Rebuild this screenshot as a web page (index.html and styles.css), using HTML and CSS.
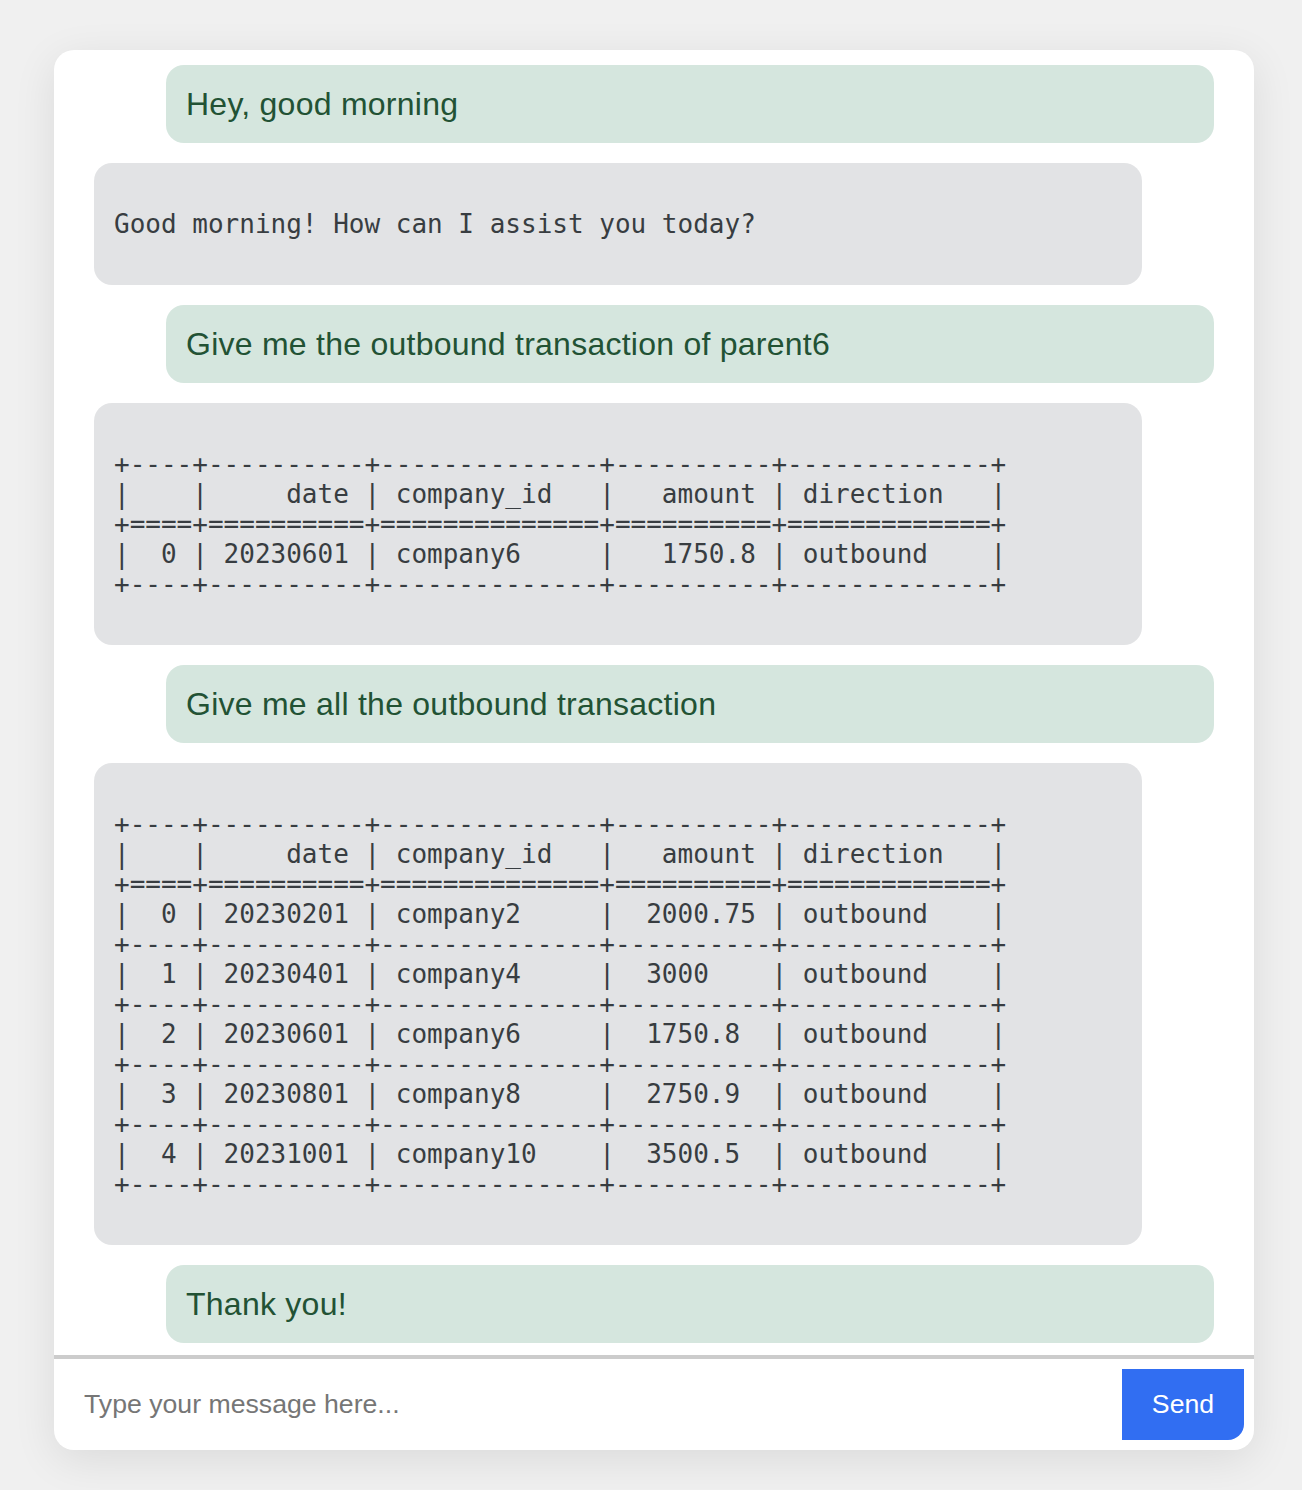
FILE: index.html
```html
<!DOCTYPE html>
<html lang="en">
<head>
<meta charset="utf-8">
<title>Chat</title>
<link rel="stylesheet" href="styles.css">
</head>
<body>
<div class="chat">
  <div class="messages">
    <div class="msg user">Hey, good morning</div>
    <div class="msg bot"><pre>Good morning! How can I assist you today?</pre></div>
    <div class="msg user">Give me the outbound transaction of parent6</div>
    <div class="msg bot"><pre>+----+----------+--------------+----------+-------------+
|    |     date | company_id   |   amount | direction   |
+====+==========+==============+==========+=============+
|  0 | 20230601 | company6     |   1750.8 | outbound    |
+----+----------+--------------+----------+-------------+</pre></div>
    <div class="msg user">Give me all the outbound transaction</div>
    <div class="msg bot"><pre>+----+----------+--------------+----------+-------------+
|    |     date | company_id   |   amount | direction   |
+====+==========+==============+==========+=============+
|  0 | 20230201 | company2     |  2000.75 | outbound    |
+----+----------+--------------+----------+-------------+
|  1 | 20230401 | company4     |  3000    | outbound    |
+----+----------+--------------+----------+-------------+
|  2 | 20230601 | company6     |  1750.8  | outbound    |
+----+----------+--------------+----------+-------------+
|  3 | 20230801 | company8     |  2750.9  | outbound    |
+----+----------+--------------+----------+-------------+
|  4 | 20231001 | company10    |  3500.5  | outbound    |
+----+----------+--------------+----------+-------------+</pre></div>
    <div class="msg user">Thank you!</div>
  </div>
  <div class="composer">
    <input class="input" type="text" placeholder="Type your message here...">
    <button class="send" type="button">Send</button>
  </div>
</div>
</body>
</html>
```

FILE: styles.css
```css
html, body {
  margin: 0;
  padding: 0;
}
body {
  background: #f0f0f0;
  height: 1490px;
  overflow: hidden;
  font-family: "Liberation Sans", Arial, Helvetica, sans-serif;
}
.chat {
  margin: 50px 0 0 54px;
  width: 1200px;
  background: #ffffff;
  border-radius: 20px;
  box-shadow: 0 10px 44px rgba(0, 0, 0, 0.09);
  overflow: hidden;
}
.messages {
  display: flex;
  flex-direction: column;
  gap: 20px;
  padding: 15px 40px 12px 40px;
}
.msg {
  width: 1048px;
  box-sizing: border-box;
  border-radius: 18px;
  padding: 20px;
}
.user {
  align-self: flex-end;
  background: #d5e6de;
  color: #225234;
  font-size: 32px;
  line-height: 38px;
  letter-spacing: 0.25px;
}
.bot {
  align-self: flex-start;
  background: #e2e3e5;
  color: #383d41;
}
.bot pre {
  margin: 26px 0;
  font-family: "DejaVu Sans Mono", monospace;
  font-size: 26px;
  line-height: 30px;
}
.composer {
  display: flex;
  align-items: center;
  border-top: 4px solid #cccccc;
  padding: 10px 10px 10px 0;
}
.input {
  flex: 1;
  border: none;
  outline: none;
  background: transparent;
  height: 71px;
  padding: 0 0 0 30px;
  font-family: "Liberation Sans", Arial, Helvetica, sans-serif;
  font-size: 26.67px;
  color: #222;
}
.input::placeholder {
  color: #767676;
}
.send {
  width: 122px;
  height: 71px;
  border: none;
  background: #316ef2;
  color: #ffffff;
  font-family: "Liberation Sans", Arial, Helvetica, sans-serif;
  font-size: 26.67px;
  border-radius: 0 0 16px 0;
  padding: 0;
}
```
